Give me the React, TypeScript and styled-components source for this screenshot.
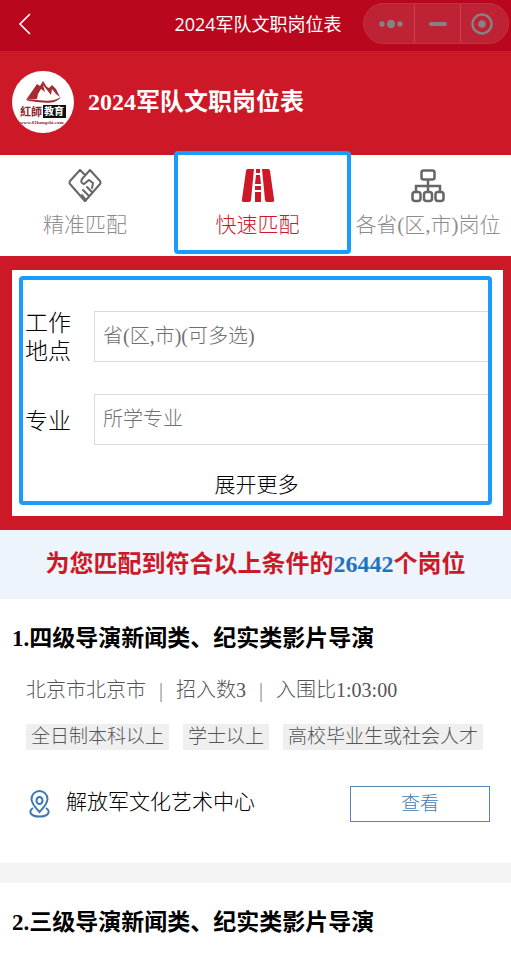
import React from "react";
import styled, { createGlobalStyle } from "styled-components";

const serif = '"Liberation Serif", "Noto Sans CJK SC", serif';
const red = "#cd1827";
const highlight = "#1a9cff";

const GlobalStyle = createGlobalStyle`
  *, *::before, *::after { box-sizing: border-box; }
  body { margin: 0; background: #fff; color: #000; font-family: ${serif}; font-weight: 300; }
  button, input { font: inherit; }
  h1, h2, p, ul, ol { margin: 0; padding: 0; }
  ul, ol { list-style: none; }
  svg { display: block; flex: none; }
`;

const NavBar = styled.header`
  display: grid;
  grid-template-columns: 1fr auto 1fr;
  align-items: center;
  height: 51px;
  padding: 0 2px 4px 7px;
  background: #b9081d;
  color: #fff;
`;

const BackButton = styled.button`
  justify-self: start;
  padding: 0 5px;
  border: 0;
  background: none;
  color: inherit;
`;

const NavTitle = styled.p`
  font-family: "Open Sans", "Noto Sans CJK SC", sans-serif;
  font-size: 18px;
  font-weight: 400;
  line-height: 24px;
  white-space: nowrap;
`;

const Capsule = styled.div`
  justify-self: end;
  display: grid;
  grid-template-columns: 50px 46px 1fr;
  width: 146px;
  height: 41px;
  border: 1px solid #c52f40;
  border-radius: 21px;
  background: #be2335;
  overflow: hidden;
`;

const CapsuleButton = styled.button`
  display: flex;
  align-items: center;
  justify-content: center;
  padding: 0;
  border: 0;
  background: none;
  color: #868283;
  & + & { border-left: 1px solid #cb4151; }
  &:first-child { padding-left: 4px; }
  &:last-child { padding-right: 5px; }
`;

const Banner = styled.div`
  display: flex;
  align-items: center;
  gap: 14px;
  height: 104px;
  padding: 0 12px 2px;
  background: ${red};
  color: #fff;
`;

const BannerTitle = styled.h1`
  font-size: 24px;
  font-weight: 700;
  line-height: 32px;
`;

const Tabs = styled.nav`
  display: grid;
  grid-template-columns: 170fr 175fr 166fr;
  height: 101px;
`;

const Tab = styled.button<{ $active?: boolean }>`
  position: relative;
  display: flex;
  flex-direction: column;
  align-items: center;
  gap: 7px;
  min-width: 0;
  padding: 14px 0 0;
  border: 0;
  background: none;
  color: ${(p) => (p.$active ? red : "#8c8c8c")};
  font-size: 21px;
  line-height: 30px;
  white-space: nowrap;
  &::after {
    content: ${(p) => (p.$active ? '""' : "none")};
    position: absolute;
    inset: -4px -6px 2px 4px;
    border: 4px solid ${highlight};
    border-radius: 4px;
  }
`;

const FilterPanel = styled.section`
  padding: 14px 8px 14px 12px;
  background: ${red};
`;

const FilterCard = styled.div`
  padding: 6px 11px 11px 7px;
  background: #fff;
`;

const FilterForm = styled.form`
  display: flex;
  flex-direction: column;
  gap: 28px;
  padding: 26px 0 1px 2px;
  border: 4px solid ${highlight};
  border-radius: 4px;
`;

const Field = styled.label`
  display: grid;
  grid-template-columns: 48px 1fr;
  gap: 21px;
  align-items: center;
  font-size: 23px;
  line-height: 28px;
`;

const FieldName = styled.span`
  padding-top: 4px;
`;

const FieldInput = styled.input`
  width: 100%;
  min-width: 0;
  height: 51px;
  padding: 0 8px;
  border: 1px solid #d9d9d9;
  border-right: 0;
  border-radius: 0;
  outline: 0;
  background: #fff;
  font-size: 20px;
  &::placeholder { color: #707070; opacity: 1; }
`;

const ExpandButton = styled.button`
  align-self: center;
  margin-top: -3px;
  padding: 0;
  border: 0;
  background: none;
  color: #000;
  font-size: 21px;
  line-height: 30px;
`;

const Summary = styled.p`
  padding: 18px 0 19px;
  background: #edf4fb;
  color: ${red};
  font-size: 24px;
  font-weight: 700;
  line-height: 32px;
  text-align: center;
`;

const Count = styled.span`
  color: #1e73be;
`;

const Job = styled.li`
  padding: 24px 21px 41px 12px;
  & + & { border-top: 20px solid #f4f4f4; }
`;

const JobTitle = styled.h2`
  font-size: 23px;
  font-weight: 700;
  line-height: 32px;
`;

const JobBody = styled.div`
  padding-left: 14px;
`;

const Meta = styled.p`
  display: flex;
  gap: 13px;
  margin-top: 20px;
  color: #555;
  font-size: 20px;
  line-height: 30px;
  white-space: nowrap;
`;

const Bar = styled.span`
  color: #888;
`;

const Tags = styled.ul`
  display: flex;
  gap: 14px;
  margin-top: 19px;
`;

const Tag = styled.li`
  padding: 0 5px;
  background: #efefef;
  color: #555;
  font-size: 19px;
  line-height: 26px;
  white-space: nowrap;
`;

const JobFooter = styled.div`
  display: flex;
  align-items: center;
  margin-top: 36px;
`;

const Place = styled.span`
  flex: 1;
  margin-left: 13px;
  padding-bottom: 4px;
  font-size: 21px;
  line-height: 30px;
`;

const ViewButton = styled.button`
  width: 140px;
  height: 36px;
  padding: 0;
  border: 1px solid #5585b5;
  background: #fff;
  color: #4478ae;
  font-size: 19px;
  line-height: 30px;
`;

const LogoText = styled.text<{ $size: number }>`
  font-family: ${serif};
  font-size: ${(p) => p.$size}px;
  font-weight: 700;
`;

function Logo() {
  return (
    <svg width="62" height="62" viewBox="0 0 62 62" role="img" aria-label="红师教育">
      <circle cx="31" cy="31" r="31" fill="#fff" />
      <path d="M14 29 L25 13 L28 15 L31 10 L35 16 L37 17 L40 14 L44 18 L48 26 L44 23 L40 18 L39 24 L35 19 L31 14 L33 21 L29 18 L26 23 L25 28 Z" fill="#a52a32" />
      <path d="M14 30 C24 26 36 34 49 26 C42 36 27 30 14 30 Z" fill="#a52a32" />
      <LogoText $size={11} x="8" y="45" fill="#8f252d">紅師</LogoText>
      <rect x="31" y="34" width="23" height="13" fill="#111" />
      <LogoText $size={10} x="32" y="44" fill="#fff">教育</LogoText>
      <LogoText $size={5} x="8" y="53" fill="#8f252d">www.81hongshi.com</LogoText>
    </svg>
  );
}

function HandshakeIcon() {
  return (
    <svg width="34" height="34" viewBox="0 0 34 34" fill="none" stroke="#666" strokeWidth="2" strokeLinejoin="round" strokeLinecap="round">
      <path d="M17 6 L12 1 L2 12 Q1 14 2 15 L16 31 Q17 33 18 31 L32 15 Q33 14 32 12 L22 1 L14 10 Q12 14 16 15 L21 11 L25 14 L24 19" />
      <path d="M19 18 L24 23 M15 21 L21 27 M14 26 L18 31" />
    </svg>
  );
}

function RoadIcon() {
  return (
    <svg width="34" height="34" viewBox="0 0 34 34" fill={red}>
      <path d="M7 0 H13 L10 31 Q10 33 8 33 H3 Q0 33 1 30 L5 2 Q5 0 7 0 Z" />
      <path d="M27 0 H21 L24 31 Q24 33 26 33 H31 Q34 33 33 30 L29 2 Q29 0 27 0 Z" />
      <path d="M15 0 H19 V4 H15 Z M15 6 H19 L20 15 H14 Z M14 17 H20 V21 H14 Z M14 23 H20 V33 H14 Z" />
    </svg>
  );
}

function OrgIcon() {
  return (
    <svg width="34" height="34" viewBox="0 0 34 34" fill="none" stroke="#666" strokeWidth="2.5">
      <rect x="10.5" y="1.5" width="13" height="9" rx="2" />
      <rect x="1.5" y="23" width="8" height="9" rx="2.500" />
      <rect x="13" y="23" width="8" height="9" rx="2.500" />
      <rect x="24.500" y="23" width="8" height="9" rx="2.500" />
      <path d="M17 11 V23 M5 23 V17 H29 V23" />
    </svg>
  );
}

function PinIcon() {
  return (
    <svg width="27" height="28" viewBox="0 0 27 28" fill="none" stroke="#3c78b4" strokeWidth="2">
      <path d="M13.500 22 C10 18 5.500 14 5.500 9 A8 8 0 0 1 21.500 9 C21.500 14 17 18 13.500 22 Z" />
      <ellipse cx="13.500" cy="10.500" rx="3" ry="3.500" />
      <path d="M7 18 C2 21 4 26.500 13.500 26.500 S25 21 20 18" />
    </svg>
  );
}

type JobData = { title: string; facts: string[]; tags: string[]; place: string };

const jobs: JobData[] = [
  {
    title: "四级导演新闻类、纪实类影片导演",
    facts: ["北京市北京市", "招入数3", "入围比1:03:00"],
    tags: ["全日制本科以上", "学士以上", "高校毕业生或社会人才"],
    place: "解放军文化艺术中心",
  },
  { title: "三级导演新闻类、纪实类影片导演", facts: [], tags: [], place: "" },
];

function JobItem({ job, index }: { job: JobData; index: number }) {
  return (
    <Job>
      <JobTitle>{index}.{job.title}</JobTitle>
      {job.place && (
        <JobBody>
          <Meta>
            {job.facts.map((fact, i) => (
              <React.Fragment key={fact}>
                {i > 0 && <Bar>|</Bar>}
                <span>{fact}</span>
              </React.Fragment>
            ))}
          </Meta>
          <Tags>{job.tags.map((tag) => <Tag key={tag}>{tag}</Tag>)}</Tags>
          <JobFooter>
            <PinIcon />
            <Place>{job.place}</Place>
            <ViewButton type="button">查看</ViewButton>
          </JobFooter>
        </JobBody>
      )}
    </Job>
  );
}

export default function App() {
  return (
    <>
      <GlobalStyle />
      <NavBar>
        <BackButton type="button" aria-label="返回">
          <svg width="24" height="24" viewBox="0 0 24 24" fill="none" stroke="currentColor" strokeWidth="1.6">
            <path d="M18 2 L8 12 L18 22" />
          </svg>
        </BackButton>
        <NavTitle>2024军队文职岗位表</NavTitle>
        <Capsule>
          <CapsuleButton type="button" aria-label="更多">
            <svg width="26" height="10" viewBox="0 0 26 10" fill="currentColor">
              <circle cx="4" cy="5" r="2.700" /><circle cx="13" cy="5" r="4.200" /><circle cx="22" cy="5" r="2.700" />
            </svg>
          </CapsuleButton>
          <CapsuleButton type="button" aria-label="最小化">
            <svg width="18" height="4" viewBox="0 0 18 4" fill="currentColor"><rect width="18" height="4" rx="2" /></svg>
          </CapsuleButton>
          <CapsuleButton type="button" aria-label="关闭">
            <svg width="22" height="22" viewBox="0 0 22 22" fill="currentColor">
              <circle cx="11" cy="11" r="9.500" fill="none" stroke="currentColor" strokeWidth="2.400" />
              <circle cx="11" cy="11" r="3.800" />
            </svg>
          </CapsuleButton>
        </Capsule>
      </NavBar>
      <Banner>
        <Logo />
        <BannerTitle>2024军队文职岗位表</BannerTitle>
      </Banner>
      <Tabs>
        <Tab type="button"><HandshakeIcon />精准匹配</Tab>
        <Tab type="button" $active><RoadIcon />快速匹配</Tab>
        <Tab type="button"><OrgIcon />各省(区,市)岗位</Tab>
      </Tabs>
      <FilterPanel>
        <FilterCard>
          <FilterForm>
            <Field>
              <FieldName>工作地点</FieldName>
              <FieldInput type="text" placeholder="省(区,市)(可多选)" />
            </Field>
            <Field>
              <FieldName>专业</FieldName>
              <FieldInput type="text" placeholder="所学专业" />
            </Field>
            <ExpandButton type="button">展开更多</ExpandButton>
          </FilterForm>
        </FilterCard>
      </FilterPanel>
      <Summary>为您匹配到符合以上条件的<Count>26442</Count>个岗位</Summary>
      <ol>
        {jobs.map((job, i) => <JobItem key={job.title} job={job} index={i + 1} />)}
      </ol>
    </>
  );
}
